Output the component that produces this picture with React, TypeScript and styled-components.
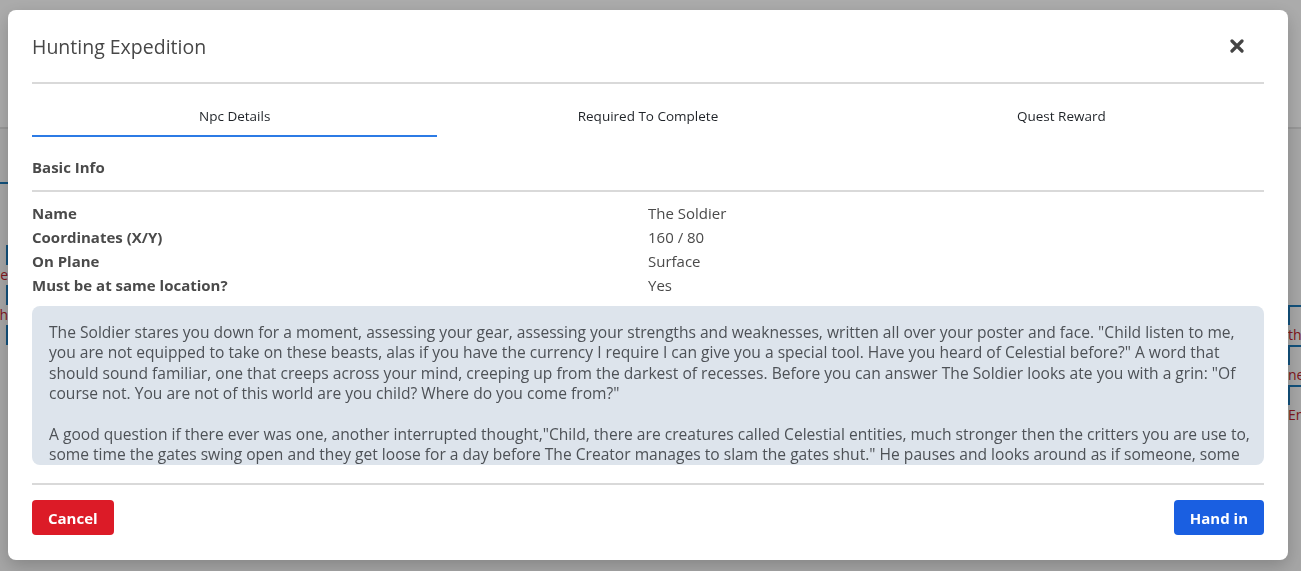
import React from "react";
import styled, { createGlobalStyle } from "styled-components";

const Global = createGlobalStyle`
  html, body { margin: 0; padding: 0; }
  body {
    font-family: "Open Sans", "Noto Sans", sans-serif;
    background: #ffffff;
    overflow: hidden;
  }
  * { box-sizing: border-box; }
`;

const Page = styled.div`
  width: 1301px;
  height: 571px;
  display: flex;
  flex-direction: column;
  background: #f7f7f7;
`;

const TopBar = styled.div`
  height: 129px;
  background: #ffffff;
  border-bottom: 2px solid #e2e2e2;
  flex-shrink: 0;
`;

const PageBody = styled.div`
  flex: 1;
  display: flex;
  justify-content: space-between;
`;

const SideCol = styled.div<{ $side: "left" | "right" }>`
  display: flex;
  flex-direction: column;
  overflow: hidden;
  width: ${(p) => (p.$side === "left" ? "8px" : "13px")};
  padding-top: ${(p) => (p.$side === "left" ? "0" : "176px")};
`;

const GhostRule = styled.div`
  height: 55px;
  border-bottom: 2px solid #1b79b8;
  margin-bottom: 61px;
`;

const GhostBox = styled.div<{ $side: "left" | "right" }>`
  height: 20px;
  ${(p) =>
    p.$side === "left"
      ? "border-right: 2px solid #1b79b8;"
      : "border-left: 2px solid #1b79b8; border-top: 2px solid #1b79b8;"}
`;

const GhostText = styled.div<{ $side: "left" | "right" }>`
  height: 20px;
  color: #c0222c;
  font-size: 14px;
  line-height: 20px;
  white-space: nowrap;
  ${(p) => (p.$side === "left" ? "text-align: right; direction: rtl;" : "")}
`;

const Backdrop = styled.div`
  position: fixed;
  inset: 0;
  background: rgba(0, 0, 0, 0.33);
  display: flex;
  align-items: flex-start;
  justify-content: flex-start;
  padding: 10px 0 0 8px;
`;

const Modal = styled.div`
  width: 1280px;
  background: #ffffff;
  border-radius: 8px;
  padding: 0 24px 25px;
  display: flex;
  flex-direction: column;
  box-shadow: 0 6px 18px rgba(0, 0, 0, 0.2);
`;

const Header = styled.div`
  height: 74px;
  display: flex;
  align-items: center;
  justify-content: space-between;
  border-bottom: 2px solid #d9d9d9;
`;

const Title = styled.h3`
  margin: 0;
  font-size: 19.5px;
  font-weight: 400;
  color: #474747;
`;

const CloseButton = styled.button`
  border: none;
  background: none;
  padding: 0;
  margin-right: 20px;
  width: 14px;
  height: 14px;
  display: flex;
  align-items: center;
  justify-content: center;
  cursor: pointer;
`;

const Tabs = styled.div`
  display: grid;
  grid-template-columns: repeat(3, 1fr);
  column-gap: 8px;
`;

const Tab = styled.button<{ $active?: boolean }>`
  border: none;
  background: none;
  font-family: inherit;
  font-size: 13.5px;
  line-height: 20px;
  color: #1f2328;
  padding: 22px 0 9px;
  border-bottom: 2px solid ${(p) => (p.$active ? "#2c7be5" : "transparent")};
  cursor: pointer;
`;

const SectionTitle = styled.div`
  padding: 20px 0 13px;
  font-size: 15px;
  line-height: 20px;
  font-weight: 700;
  color: #4a4a4a;
  border-bottom: 2px solid #d9d9d9;
`;

const InfoGrid = styled.dl`
  margin: 9px 0 0;
  display: grid;
  grid-template-columns: 616px 1fr;
  font-size: 15px;
  line-height: 24px;
  color: #4a4a4a;
`;

const Label = styled.dt`
  font-weight: 700;
`;

const Value = styled.dd`
  margin: 0;
`;

const StoryBox = styled.div`
  margin-top: 9px;
  height: 159px;
  overflow: hidden;
  background: #dde4ec;
  border-radius: 8px;
  padding: 16px 10px 16px 17px;
  font-size: 15.6px;
  line-height: 20.33px;
  color: #4d5156;
`;

const Para = styled.p`
  margin: 0 0 20.33px;
`;

const Footer = styled.div`
  margin-top: 18px;
  border-top: 2px solid #d9d9d9;
  padding-top: 15px;
  display: flex;
  justify-content: space-between;
`;

const ActionButton = styled.button<{ $variant: "danger" | "primary" }>`
  height: 35px;
  border: none;
  border-radius: 4px;
  padding: 0 16px;
  font-family: inherit;
  font-size: 15px;
  font-weight: 700;
  color: #ffffff;
  background: ${(p) => (p.$variant === "danger" ? "#dc1b27" : "#1a5fe1")};
  cursor: pointer;
`;

const CloseIcon = () => (
  <svg width="14" height="14" viewBox="0 0 14 14">
    <path d="M2 2 L12 12 M12 2 L2 12" stroke="#444" strokeWidth="3.2" strokeLinecap="round" />
  </svg>
);

export default function App() {
  const leftGhost = ["the", "with"];
  const rightGhost = ["the", "need", "Enter"];
  return (
    <>
      <Global />
      <Page>
        <TopBar />
        <PageBody>
          <SideCol $side="left">
            <GhostRule />
            {leftGhost.map((t, i) => (
              <React.Fragment key={i}>
                <GhostBox $side="left" />
                <GhostText $side="left">{t}</GhostText>
              </React.Fragment>
            ))}
            <GhostBox $side="left" />
          </SideCol>
          <SideCol $side="right">
            {rightGhost.map((t, i) => (
              <React.Fragment key={i}>
                <GhostBox $side="right" />
                <GhostText $side="right">{t}</GhostText>
              </React.Fragment>
            ))}
          </SideCol>
        </PageBody>
      </Page>
      <Backdrop>
        <Modal>
          <Header>
            <Title>Hunting Expedition</Title>
            <CloseButton aria-label="Close">
              <CloseIcon />
            </CloseButton>
          </Header>
          <Tabs>
            <Tab $active>Npc Details</Tab>
            <Tab>Required To Complete</Tab>
            <Tab>Quest Reward</Tab>
          </Tabs>
          <SectionTitle>Basic Info</SectionTitle>
          <InfoGrid>
            <Label>Name</Label>
            <Value>The Soldier</Value>
            <Label>Coordinates (X/Y)</Label>
            <Value>160 / 80</Value>
            <Label>On Plane</Label>
            <Value>Surface</Value>
            <Label>Must be at same location?</Label>
            <Value>Yes</Value>
          </InfoGrid>
          <StoryBox>
            <Para>
              The Soldier stares you down for a moment, assessing your gear, assessing your strengths and weaknesses, written all over your poster and face. "Child listen to me, you are not equipped to take on these beasts, alas if you have the currency I require I can give you a special tool. Have you heard of Celestial before?" A word that should sound familiar, one that creeps across your mind, creeping up from the darkest of recesses. Before you can answer The Soldier looks ate you with a grin: "Of course not. You are not of this world are you child? Where do you come from?"
            </Para>
            <Para>
              A good question if there ever was one, another interrupted thought,"Child, there are creatures called Celestial entities, much stronger then the critters you are use to, some time the gates swing open and they get loose for a day before The Creator manages to slam the gates shut." He pauses and looks around as if someone, some one might be listening. "I can give you a tool, a special tool, that will let you hunt these creatures down when they escape."
            </Para>
          </StoryBox>
          <Footer>
            <ActionButton $variant="danger">Cancel</ActionButton>
            <ActionButton $variant="primary">Hand in</ActionButton>
          </Footer>
        </Modal>
      </Backdrop>
    </>
  );
}
